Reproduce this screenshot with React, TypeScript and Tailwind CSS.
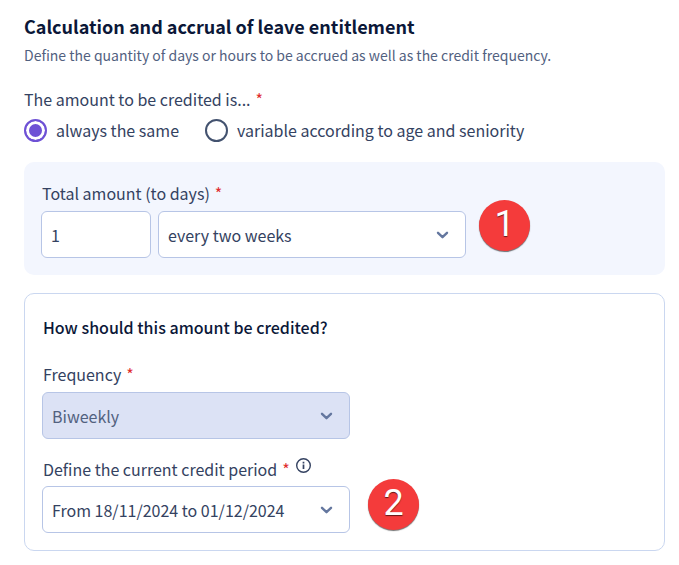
import { useState } from 'react';

const Chevron = () => (
  <svg
    className="pointer-events-none absolute right-4 top-1/2 h-3.5 w-3.5 -translate-y-1/2"
    viewBox="0 0 14 14"
    fill="none"
    stroke="#64779f"
    strokeWidth="2.4"
    strokeLinecap="round"
    strokeLinejoin="round"
    aria-hidden="true"
  >
    <path d="M2 4.8 6.5 9.2 11 4.8" />
  </svg>
);

const InfoIcon = () => (
  <svg className="block h-4 w-4" viewBox="0 0 16 16" fill="none" stroke="#344261" aria-hidden="true">
    <circle cx="7.5" cy="8.5" r="6.8" strokeWidth="1.4" />
    <path d="M7.5 7.5V12M7.5 4.8V6.4" strokeWidth="1.7" />
  </svg>
);

const Required = () => <span className="ml-[5px] text-[#e02d2d]">*</span>;

interface BadgeProps {
  value: number;
  className: string;
}

const Badge = ({ value, className }: BadgeProps) => (
  <span
    className={`${className} absolute left-full flex h-[51px] w-[51px] justify-center rounded-full bg-[#f43b3b] font-['Roboto',sans-serif] text-4xl leading-12 text-white shadow-[0_1px_1px_rgba(0,0,0,0.55)] [text-shadow:0_1px_1px_rgba(0,0,0,0.6)]`}
  >
    {value}
  </span>
);

interface SelectProps {
  id: string;
  options: string[];
  disabled?: boolean;
  label?: string;
}

const Select = ({ id, options, disabled, label }: SelectProps) => (
  <div className="relative">
    <select
      id={id}
      disabled={disabled}
      aria-label={label}
      className="block h-[47px] w-full appearance-none rounded-md border border-[#b7c5e6] bg-white pl-[9px] pr-10 text-base text-[#344261] opacity-100 disabled:bg-[#dce2f5] disabled:text-[#52617f]"
    >
      {options.map((option) => (
        <option key={option}>{option}</option>
      ))}
    </select>
    <Chevron />
  </div>
);

const choices = [
  { value: 'same', label: 'always the same' },
  { value: 'variable', label: 'variable according to age and seniority' },
];

const App = () => {
  const [mode, setMode] = useState('same');
  const [amount, setAmount] = useState('1');

  return (
    <main className="bg-white pb-4 pl-6 pr-3.5 pt-3 font-['Noto_Sans_CJK_SC',sans-serif] text-base leading-6 text-[#344261]">
      <h1 className="text-lg font-bold leading-7 text-[#0b1738]">
        Calculation and accrual of leave entitlement
      </h1>
      <p className="mt-[5px] text-sm leading-5 text-[#52617f]">
        Define the quantity of days or hours to be accrued as well as the credit frequency.
      </p>

      <fieldset className="mt-[22px]">
        <legend>
          The amount to be credited is...
          <Required />
        </legend>
        <div className="mt-[7px] flex flex-wrap gap-x-[26px]">
          {choices.map((choice) => (
            <label key={choice.value} className="flex items-center gap-[9px]">
              <input
                type="radio"
                name="mode"
                value={choice.value}
                checked={mode === choice.value}
                onChange={() => setMode(choice.value)}
                className="h-[23px] w-[23px] appearance-none rounded-full border-2 border-[#43526f] bg-white checked:border-[#6e51d5] checked:bg-[#6e51d5] checked:shadow-[inset_0_0_0_3px_white]"
              />
              {choice.label}
            </label>
          ))}
        </div>
      </fieldset>

      <section className="mt-5 rounded-[10px] bg-[#f3f6fe] px-[17px] pb-[17px] pt-[19px]">
        <label htmlFor="amount" className="block pl-px">
          Total amount (to days)
          <Required />
        </label>
        <div className="mt-1.5 flex gap-[7px]">
          <input
            id="amount"
            type="text"
            value={amount}
            onChange={(e) => setAmount(e.target.value)}
            className="block h-[47px] w-[110px] rounded-md border border-[#b7c5e6] bg-white px-[9px]"
          />
          <div className="relative w-[321px] pr-[13px]">
            <Select id="interval" label="Interval" options={['every two weeks', 'every week', 'every month']} />
            <Badge value={1} className="-top-[11px]" />
          </div>
        </div>
      </section>

      <section className="mt-[18px] rounded-[10px] border border-[#cad7f0] px-[17px] pb-[17px] pt-[21px]">
        <h2 className="pl-px font-medium text-[#0b1738]">How should this amount be credited?</h2>
        <label htmlFor="frequency" className="mt-[23px] block pl-px">
          Frequency
          <Required />
        </label>
        <div className="mt-1.5 w-[308px]">
          <Select id="frequency" options={['Biweekly']} disabled />
        </div>

        <div className="mt-[18px] flex items-start pl-px">
          <label htmlFor="period">
            Define the current credit period
            <Required />
          </label>
          <button type="button" aria-label="More information" className="ml-1.5">
            <InfoIcon />
          </button>
        </div>
        <div className="relative mt-[5px] w-[326px] pr-[18px]">
          <Select id="period" options={['From 18/11/2024 to 01/12/2024', 'From 02/12/2024 to 15/12/2024']} />
          <Badge value={2} className="-top-[7px]" />
        </div>
      </section>
    </main>
  );
};

export default App;
